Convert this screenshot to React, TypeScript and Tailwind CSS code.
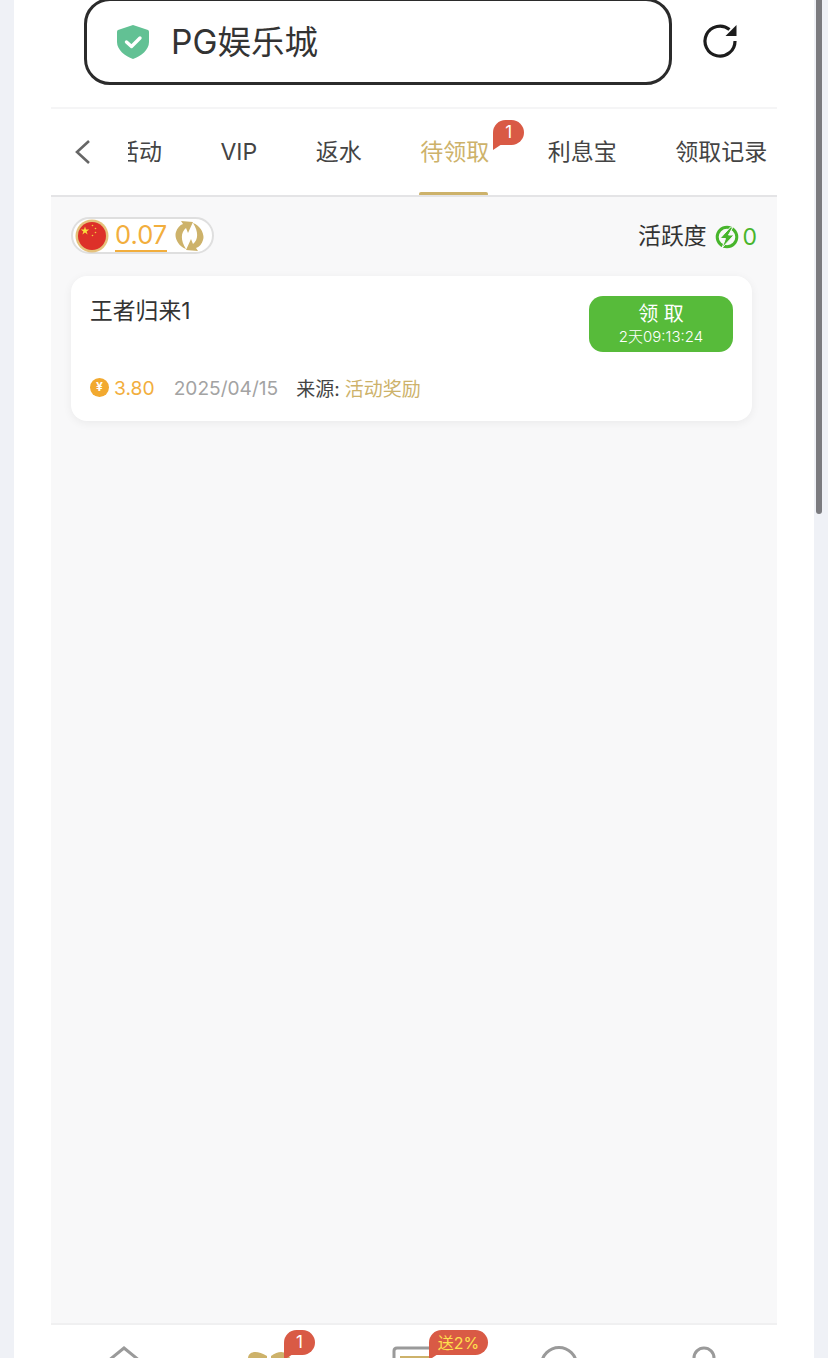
const tabs = ["活动", "VIP", "返水", "待领取", "利息宝", "领取记录"];

function ShieldIcon() {
  return (
    <svg width="32" height="34" viewBox="0 0 32 34">
      <path d="M16 0 L31 5 Q32 5.400 32 7 V17 C32 25 24 31 16 34 C8 31 0 25 0 17 V7 Q0 5.400 1 5 Z" fill="#62c194" />
      <path d="M9.500 17 L14.500 21.500 L23 13" fill="none" stroke="#fff" strokeWidth="3.400" strokeLinecap="round" strokeLinejoin="round" />
    </svg>
  );
}

function ReloadIcon() {
  return (
    <svg width="36" height="36" viewBox="0 0 36 36">
      <path d="M33 18 A15 15 0 1 1 27.500 6.500" fill="none" stroke="#1c1c1c" strokeWidth="3.200" />
      <path d="M34.500 2 V13 H23.500 Z" fill="#1c1c1c" />
    </svg>
  );
}

function FlagIcon() {
  return (
    <svg width="34" height="34" viewBox="0 0 34 34">
      <circle cx="17" cy="17" r="16.500" fill="#e5c27c" />
      <circle cx="17" cy="17" r="14" fill="#dd3029" />
      <path d="M10 7.500 L11 10.500 L14.200 10.500 L11.600 12.400 L12.600 15.400 L10 13.500 L7.400 15.400 L8.400 12.400 L5.800 10.500 L9 10.500 Z" fill="#f9dc3c" />
      <circle cx="17.500" cy="6.500" r="0.800" fill="#f4c83c" />
      <circle cx="20.500" cy="9.500" r="0.800" fill="#f4c83c" />
      <circle cx="20.500" cy="13.500" r="0.800" fill="#f4c83c" />
      <circle cx="17.500" cy="16.500" r="0.800" fill="#f4c83c" />
    </svg>
  );
}

function SyncIcon() {
  const arrow = "M11 28 C3 25 -1 16 1 11 C2 7 5 4 8 3 L6 0 L18 1 L13 12 L11 7 C6 11 5 19 11 28 Z";
  return (
    <svg width="29" height="30" viewBox="0 0 29 30">
      <path d={arrow} fill="#cdb26a" />
      <path d={arrow} fill="#cdb26a" transform="rotate(180 14.500 15)" />
    </svg>
  );
}

function BoltIcon() {
  return (
    <svg width="24" height="24" viewBox="0 0 24 24">
      <circle cx="12" cy="12" r="9.800" fill="none" stroke="#47b52c" strokeWidth="3" />
      <path d="M15.500 2 L5 13.500 H10.500 L7 23 L19 10 H13.500 L18 2 Z" fill="#47b52c" stroke="#f8f8f9" strokeWidth="1" />
    </svg>
  );
}

function YenIcon() {
  return (
    <div className="flex h-[19px] w-[19px] items-center justify-center rounded-full bg-[#f2a92f] text-[12px] font-bold leading-none text-white">
      ¥
    </div>
  );
}

function BubbleTail() {
  return (
    <svg className="absolute top-full left-0 -mt-px" width="9" height="6" viewBox="0 0 9 6">
      <path d="M0 0 H9 L0 6 Z" fill="#d95a45" />
    </svg>
  );
}

function NavIcon({ name }: { name: string }) {
  if (name === "home") {
    return (
      <svg width="40" height="40" viewBox="0 0 40 40">
        <path d="M4 16 L20 3 L36 16 V38 H4 Z" fill="none" stroke="#9a9a9a" strokeWidth="3" />
      </svg>
    );
  }
  if (name === "gift") {
    return (
      <svg width="44" height="40" viewBox="0 0 44 40">
        <path d="M1 13 C2 6 10 5 20 11 V14 H1 Z M24 11 C32 5 40 6 43 13 V14 H24 Z" fill="#cdb26a" />
      </svg>
    );
  }
  if (name === "wallet") {
    return (
      <svg width="44" height="40" viewBox="0 0 44 40">
        <path d="M2 40 V6 Q2 3 5 3 H42" fill="none" stroke="#9a9a9a" strokeWidth="3" />
        <path d="M8 11 H38 V16 H8 Z" fill="#cdb26a" />
      </svg>
    );
  }
  if (name === "service") {
    return (
      <svg width="40" height="40" viewBox="0 0 40 40">
        <circle cx="20" cy="20" r="17.500" fill="none" stroke="#9a9a9a" strokeWidth="3" />
      </svg>
    );
  }
  return (
    <svg width="40" height="40" viewBox="0 0 40 40">
      <circle cx="20" cy="13" r="10" fill="none" stroke="#9a9a9a" strokeWidth="3" />
    </svg>
  );
}

export default function App() {
  return (
    <div
      className="relative flex h-[1358px] w-[828px] justify-center overflow-hidden bg-[#eff1f6] px-[14px]"
      style={{ fontFamily: 'Inter, "Noto Sans CJK SC", sans-serif' }}
    >
      {/* page scrollbar */}
      <div className="absolute top-0 right-[6px] h-[514px] w-[6px] rounded-b-[3px] bg-[#7b7b7f]" />

      <div className="flex h-full w-[800px] flex-col bg-white px-[37px]">
        {/* address bar */}
        <div className="flex h-[107px] w-full shrink-0 items-start">
          <div className="-mt-[2px] ml-[33px] flex h-[87px] w-[588px] items-center rounded-[26px] border-[3px] border-[#2b2b2b] bg-white pl-[30px]">
            <ShieldIcon />
            <span className="mt-[2px] ml-[22px] text-[33.500px] leading-none text-[#333]">PG娱乐城</span>
          </div>
          <div className="ml-[30px] mt-[23px]">
            <ReloadIcon />
          </div>
        </div>

        {/* tabs */}
        <div className="flex h-[90px] shrink-0 items-stretch border-t-2 border-b-2 border-t-[#f5f5f6] border-b-[#e4e4e6]">
          <div className="flex w-[77px] shrink-0 items-center pl-[23px]">
            <svg width="17" height="26" viewBox="0 0 17 26">
              <path d="M15 2 L3 13 L15 24" fill="none" stroke="#666" strokeWidth="2.600" />
            </svg>
          </div>
          <div className="flex min-w-0 flex-1 overflow-hidden">
            <div className="-ml-[12px] flex shrink-0 gap-[58.500px]">
              {tabs.map((tab) => (
                <div
                  key={tab}
                  className={
                    tab === "待领取"
                      ? "relative flex shrink-0 items-center text-[23px] leading-none text-[#cdb26a]"
                      : "relative flex shrink-0 items-center text-[23px] leading-none text-[#444]"
                  }
                >
                  {tab}
                  {tab === "待领取" && (
                    <>
                      <div className="absolute -bottom-px -left-px h-[4px] w-full rounded-full bg-[#cdb26a]" />
                      <div className="absolute -right-[35px] top-[11px] flex h-[25px] w-[31px] items-center justify-center rounded-[13px] rounded-bl-none bg-[#d95a45] text-[17px] text-white">
                        1
                        <BubbleTail />
                      </div>
                    </>
                  )}
                </div>
              ))}
            </div>
          </div>
        </div>

        {/* content */}
        <div className="flex min-h-0 flex-1 flex-col bg-[#f8f8f9] pr-[25px] pl-[20px] pt-[20px]">
          <div className="flex items-center justify-between">
            <div className="flex h-[37px] w-[143px] items-center rounded-full border-2 border-[#dfdfdf] bg-white pl-[2px]">
              <FlagIcon />
              <span className="ml-[6px] border-b-2 border-[#f2ae3d] text-[25.500px] leading-[30px] text-[#f2ae3d]">0.07</span>
              <div className="ml-[8px]">
                <SyncIcon />
              </div>
            </div>
            <div className="-mr-[5px] mt-[3px] flex items-center">
              <span className="-mt-[2px] text-[22.800px] leading-none text-[#333]">活跃度</span>
              <div className="ml-[9px]">
                <BoltIcon />
              </div>
              <span className="ml-[3px] text-[23px] leading-none text-[#47b52c]">0</span>
            </div>
          </div>

          <div className="mt-[22px] w-[681px] rounded-[16px] bg-white pt-[20px] pr-[19px] pb-[19px] pl-[19px] shadow-[0_2px_10px_rgba(0,0,0,0.06)]">
            <div className="flex items-start justify-between">
              <span className="mt-[3px] text-[22.800px] leading-[24px] text-[#333]">王者归来1</span>
              <div className="flex h-[56px] w-[144px] flex-col items-center justify-center rounded-[14px] bg-[#57bb3a] text-white">
                <span className="text-[20px] leading-[26px]">领 取</span>
                <span className="text-[15px] font-light leading-[20px]">2天09:13:24</span>
              </div>
            </div>
            <div className="mt-[24px] flex h-[26px] items-center">
              <div className="-mt-[4px]">
                <YenIcon />
              </div>
              <span className="ml-[5px] text-[19.300px] leading-none text-[#f2ae3d]">3.80</span>
              <span className="ml-[19px] text-[19.100px] leading-none text-[#a3a3a3]">2025/04/15</span>
              <span className="ml-[18px] text-[19px] leading-none text-[#444]">来源:</span>
              <span className="ml-[5px] text-[19px] leading-none text-[#cdb26a]">活动奖励</span>
            </div>
          </div>
        </div>

        {/* bottom nav, cut off by the window */}
        <div className="grid h-[35px] shrink-0 grid-cols-5 overflow-hidden border-t-2 border-[#f0f0f1] bg-white">
          {["home", "gift", "wallet", "service", "mine"].map((name) => (
            <div key={name} className="relative flex justify-center pt-[20px]">
              <NavIcon name={name} />
            </div>
          ))}
        </div>
      </div>

      {/* nav badges overlap the bar's top edge */}
      <div className="absolute top-[1330px] left-[284px] flex h-[25px] w-[31px] items-center justify-center rounded-[13px] rounded-bl-none bg-[#d95a45] text-[17px] leading-none text-white">
        1
        <BubbleTail />
      </div>
      <div className="absolute top-[1330px] left-[429px] flex h-[25px] w-[59px] items-center justify-center rounded-[13px] rounded-bl-none bg-[#d95a45] text-[16px] leading-none text-[#ffe14d]">
        送2%
        <BubbleTail />
      </div>
    </div>
  );
}
